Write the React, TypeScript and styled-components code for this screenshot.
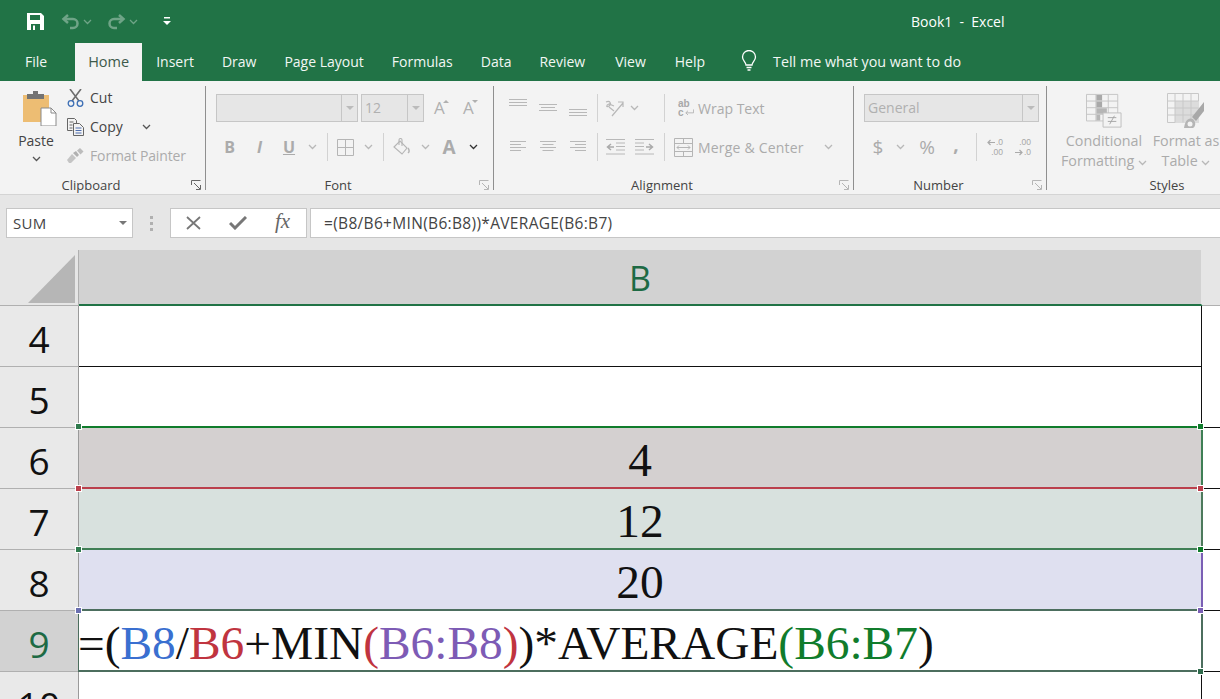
import styled, { createGlobalStyle } from "styled-components";
import type { ReactNode } from "react";

const GlobalStyle = createGlobalStyle`
  html, body { margin: 0; padding: 0; height: 100%; overflow: hidden; background: #fff; }
  body { font-family: "Open Sans", "Noto Sans", sans-serif; }
`;

const Page = styled.div`
  width: 1220px;
  height: 699px;
  overflow: hidden;
  display: flex;
  flex-direction: column;
`;

const TitleBar = styled.div`
  height: 43px;
  background: #217346;
  display: flex;
  align-items: center;
  color: #fff;
  flex: none;
`;

const Quick = styled.div<{ $w: number; $dim?: boolean }>`
  width: ${(p) => p.$w}px;
  display: flex;
  justify-content: center;
  align-items: center;
  opacity: ${(p) => (p.$dim ? 0.35 : 1)};
`;

const QuickBar = styled.div`
  display: flex;
  align-items: center;
  padding-left: 24px;
  width: 880px;
`;

const Title = styled.div`
  margin-left: 7px;
  font-size: 14px;
  white-space: pre;
`;

const TabBar = styled.div`
  height: 38px;
  background: #217346;
  display: flex;
  align-items: stretch;
  flex: none;
  padding-left: 11px;
`;

const Tab = styled.div<{ $active?: boolean; $ml?: number }>`
  padding: 0 ${(p) => (p.$active ? 13 : 14)}px 2px;
  margin-left: ${(p) => p.$ml ?? 0}px;
  display: flex;
  align-items: center;
  font-size: 14px;
  box-sizing: border-box;
  color: ${(p) => (p.$active ? "#3d5a4a" : "#f2f7f4")};
  background: ${(p) => (p.$active ? "#f3f3f3" : "transparent")};
  ${(p) => (p.$active ? "width: 67px; font-size: 14.5px;" : "")}
`;

const FileTab = styled(Tab)`
  margin-right: 14px;
`;

const TellMe = styled.div`
  margin-left: 21px;
  display: flex;
  align-items: center;
  gap: 15px;
  font-size: 14.3px;
  color: #f2f7f4;
  padding-bottom: 2px;
`;

const Ribbon = styled.div`
  height: 114px;
  background: #f3f3f3;
  border-bottom: 1px solid #d4d4d4;
  box-sizing: border-box;
  display: flex;
  flex: none;
  overflow: hidden;
`;

const Group = styled.div<{ $w: number; $last?: boolean }>`
  width: ${(p) => p.$w}px;
  flex: none;
  box-sizing: border-box;
  margin-top: 5px;
  height: 104px;
  border-right: ${(p) => (p.$last ? "none" : "1px solid #8f8f8f")};
  display: flex;
  flex-direction: column;
  position: relative;
`;

const GroupBody = styled.div<{ $pl?: number }>`
  flex: 1;
  padding-left: ${(p) => p.$pl ?? 0}px;
  min-height: 0;
`;

const GroupLabel = styled.div<{ $pr?: number; $pl?: number }>`
  height: 20px;
  flex: none;
  text-align: center;
  font-size: 13px;
  color: #444;
  line-height: 18px;
  margin-bottom: -6px;
  padding-right: ${(p) => p.$pr ?? 23}px;
  padding-left: ${(p) => p.$pl ?? 0}px;
`;

const Launcher = styled.div`
  position: absolute;
  right: 4px;
  bottom: 0;
  line-height: 0;
`;

const Row = styled.div<{ $h: number; $mt?: number }>`
  display: flex;
  align-items: center;
  height: ${(p) => p.$h}px;
  margin-top: ${(p) => p.$mt ?? 0}px;
`;

const Slot = styled.div<{ $w: number; $dy?: number }>`
  width: ${(p) => p.$w}px;
  flex: none;
  display: flex;
  justify-content: center;
  align-items: center;
  color: #aaa;
  ${(p) => (p.$dy ? `transform: translateY(${p.$dy}px);` : "")}
`;

const Divider = styled.div`
  width: 1px;
  height: 28px;
  flex: none;
  background: #d2d2d2;
`;

const Combo = styled.div<{ $w: number }>`
  width: ${(p) => p.$w}px;
  height: 28px;
  box-sizing: border-box;
  background: #e6e6e6;
  border: 1px solid #c6c6c6;
  display: flex;
  align-items: stretch;
  flex: none;
  margin-right: 3px;
  font-size: 14px;
  color: #b0b0b0;
`;

const ComboText = styled.div`
  flex: 1;
  padding-left: 3px;
  line-height: 26px;
`;

const ComboArrow = styled.div`
  width: 15px;
  border-left: 1px solid #c6c6c6;
  display: flex;
  align-items: center;
  justify-content: center;
`;

const Caret = styled.div`
  width: 0;
  height: 0;
  border-left: 4px solid transparent;
  border-right: 4px solid transparent;
  border-top: 4px solid #bbb;
`;

const PasteCol = styled.div`
  width: 52px;
  margin-left: 10px;
  display: flex;
  flex-direction: column;
  align-items: center;
  font-size: 14px;
  color: #444;
  flex: none;
`;

const PasteLabel = styled.div`
  margin-top: 4px;
  line-height: 20px;
`;

const PasteChevron = styled.div`
  margin-top: 5px;
  line-height: 0;
`;

const ClipRows = styled.div`
  display: flex;
  flex-direction: column;
  margin-left: 5px;
  margin-top: -3px;
`;

const ClipRow = styled.div<{ $dim?: boolean }>`
  height: 29px;
  display: flex;
  align-items: center;
  gap: 6px;
  font-size: 14px;
  letter-spacing: ${(p) => (p.$dim ? "-0.12px" : "0")};
  color: ${(p) => (p.$dim ? "#ababab" : "#444")};
  white-space: nowrap;
`;

const ClipBody = styled(GroupBody)`
  display: flex;
`;

const Disabled = styled.span<{ $size?: number; $ml?: number; $w?: number; $lift?: number; $ls?: number }>`
  color: #ababab;
  font-size: ${(p) => p.$size ?? 14}px;
  margin-left: ${(p) => p.$ml ?? 0}px;
  letter-spacing: ${(p) => p.$ls ?? 0}px;
  white-space: nowrap;
  ${(p) => (p.$w ? `width: ${p.$w}px;` : "")}
  ${(p) => (p.$lift ? `margin-top: -${p.$lift}px;` : "")}
`;

const Underlined = styled(Disabled)`
  text-decoration: underline;
`;

const GrowGlyph = styled.div`
  display: flex;
  align-items: flex-start;
  color: #b0b0b0;
  font-size: 17px;
  line-height: 20px;
  width: 16px;
`;

const GrowMark = styled.div<{ $down?: boolean }>`
  width: 0;
  height: 0;
  margin: 2px 0 0 -2px;
  border-left: 3px solid transparent;
  border-right: 3px solid transparent;
  ${(p) => (p.$down ? "border-top: 3px solid #b0b0b0;" : "border-bottom: 3px solid #b0b0b0;")}
`;

const TinyStack = styled.div`
  display: flex;
  flex-direction: column;
  font-family: "Liberation Sans", sans-serif;
  font-size: 8.5px;
  line-height: 10px;
  color: #a8a8a8;
`;

const TinyLine = styled.div`
  display: flex;
  align-items: center;
  justify-content: flex-end;
  gap: 1px;
  height: 10px;
`;

const WrapGlyph = styled(TinyStack)`
  font-size: 10px;
  font-weight: 700;
  line-height: 11.5px;
  width: 16px;
`;

const WrapLine = styled(TinyLine)`
  justify-content: flex-start;
  height: 8.5px;
`;

const StyleBtn = styled.div<{ $w: number }>`
  width: ${(p) => p.$w}px;
  display: flex;
  flex-direction: column;
  align-items: center;
  color: #ababab;
  font-size: 14.3px;
  line-height: 20px;
  white-space: nowrap;
  flex: none;
`;

const StyleText = styled.div`
  margin-top: 2px;
  text-align: center;
`;

const StylesBody = styled(GroupBody)`
  display: flex;
  padding-top: 7px;
  padding-left: 16px;
`;

const FormulaBar = styled.div`
  height: 55px;
  background: #e6e6e6;
  display: flex;
  align-items: flex-start;
  padding: 13px 0 0 6px;
  box-sizing: border-box;
  flex: none;
`;

const FieldBox = styled.div<{ $w?: number }>`
  height: 30px;
  box-sizing: border-box;
  background: #fff;
  border: 1px solid #c6c6c6;
  display: flex;
  align-items: center;
  flex: ${(p) => (p.$w ? "none" : "1")};
  ${(p) => (p.$w ? `width: ${p.$w}px;` : "")}
`;

const NameBox = styled(FieldBox)`
  justify-content: space-between;
  padding: 0 5px 0 6px;
  font-size: 15px;
  color: #444;
  letter-spacing: 0.3px;
`;

const NameCaret = styled(Caret)`
  border-top-color: #777;
`;

const Grip = styled.div`
  width: 37px;
  display: flex;
  flex-direction: column;
  align-items: center;
  gap: 3px;
  padding-top: 8px;
  flex: none;
`;

const GripDot = styled.div`
  width: 3px;
  height: 3px;
  background: #b0b0b0;
`;

const FxSlot = styled.div<{ $w: number }>`
  width: ${(p) => p.$w}px;
  display: flex;
  justify-content: center;
  align-items: center;
`;

const FxText = styled.span`
  font-family: "Liberation Serif", serif;
  font-style: italic;
  font-size: 21px;
  color: #666;
  margin-top: -3px;
`;

const FormulaInput = styled(FieldBox)`
  margin-left: 3px;
  padding-left: 13px;
  font-size: 15.5px;
  letter-spacing: 0.32px;
  color: #444;
  border-right: none;
`;

const Sheet = styled.div`
  flex: 1;
  display: grid;
  grid-template-columns: 79px 1124px 17px;
  grid-auto-rows: 61px;
  grid-template-rows: 56px;
  position: relative;
  min-height: 0;
  overflow: hidden;
`;

const Corner = styled.div`
  background: #e6e6e6;
  border-bottom: 1px solid #b0b0b0;
  border-right: 1px solid #b0b0b0;
  box-sizing: border-box;
  line-height: 0;
`;

const ColHead = styled.div`
  background: #d2d2d2;
  border-bottom: 2px solid #217346;
  border-right: 2px solid #e6e6e6;
  box-sizing: border-box;
  display: flex;
  align-items: center;
  justify-content: center;
  font-size: 34px;
  color: #1d6a44;
  padding-top: 2px;
`;

const HeadFill = styled.div`
  background: #e6e6e6;
  border-bottom: 1px solid #b0b0b0;
`;

const RowHead = styled.div<{ $active?: boolean }>`
  background: ${(p) => (p.$active ? "#d2d2d2" : "#e9e9e9")};
  border-bottom: 1px solid #b0b0b0;
  border-right: 1px solid #9a9a9a;
  box-sizing: border-box;
  display: flex;
  align-items: center;
  justify-content: center;
  font-size: 37px;
  color: ${(p) => (p.$active ? "#1d6a44" : "#111")};
  padding-top: 5px;
`;

const Cell = styled.div<{ $bg?: string; $top?: string; $right?: string; $left?: string; $bottom?: string }>`
  position: relative;
  background: ${(p) => p.$bg ?? "#fff"};
  box-sizing: border-box;
  border-bottom: ${(p) => (p.$bottom ? `2px solid ${p.$bottom}` : "1px solid #111")};
  border-right: ${(p) => (p.$right ? `2px solid ${p.$right}` : "1px solid #111")};
  margin-right: ${(p) => (p.$right ? 0 : 1)}px;
  box-shadow: ${(p) => (p.$top ? `0 -2px 0 ${p.$top}` : "0 0 0 transparent")}${(p) => (p.$left ? `, -1px 0 0 ${p.$left}` : "")};
  display: flex;
  align-items: center;
  justify-content: center;
  font-family: "Liberation Serif", serif;
  font-size: 47.4px;
  color: #111;
  padding-top: 4px;
`;

const FormulaCell = styled(Cell)`
  justify-content: flex-start;
  white-space: nowrap;
`;

const FormulaText = styled.span`
  margin-left: -1px;
`;

const Ref = styled.span<{ $c: string }>`
  color: ${(p) => p.$c};
`;

const Outside = styled.div<{ $line?: boolean }>`
  background: #fff;
  border-bottom: ${(p) => (p.$line ? "1px solid #111" : "none")};
`;

const Handle = styled.div<{ $c: string; $x: "l" | "r"; $y?: "t" | "b" }>`
  position: absolute;
  ${(p) => (p.$y === "t" ? "top: -4px;" : "bottom: -4px;")}
  ${(p) => (p.$x === "l" ? "left: -3px;" : "right: -2px;")}
  width: 5px;
  height: 5px;
  background: ${(p) => p.$c};
  z-index: 3;
  outline: 1px solid #fff;
`;

const ChevronIcon = ({ c = "#b8b8b8" }: { c?: string }) => (
  <svg width="9" height="6" viewBox="0 0 9 6" fill="none">
    <path d="M1 1l3.500 3.500L8 1" stroke={c} strokeWidth="1.300" />
  </svg>
);

const LauncherIcon = ({ c = "#b5b5b5" }: { c?: string }) => (
  <svg width="10" height="10" viewBox="0 0 10 10" fill="none" stroke={c}>
    <path d="M.5 5V.5H9.500M3 3l6 6M9.500 5V9.500H5" />
  </svg>
);

const SaveIcon = () => (
  <svg width="17" height="17" viewBox="0 0 17 17">
    <path d="M0 0h14l3 3v14H0z" fill="#fff" />
    <path d="M3 2h10v5H3z" fill="#217346" />
    <path d="M4 11h9v6H4z" fill="#217346" />
    <path d="M6 12.500h2V17H6z" fill="#fff" />
  </svg>
);

const UndoIcon = ({ flip }: { flip?: boolean }) => (
  <svg width="19" height="16" viewBox="0 0 19 16" fill="none" style={flip ? { transform: "scaleX(-1)" } : undefined}>
    <path d="M3 5h9a4.500 4.500 0 0 1 0 9H9" stroke="#fff" strokeWidth="2.500" />
    <path d="M7 1L2.500 5 7 9" stroke="#fff" strokeWidth="2.500" />
  </svg>
);

const BulbIcon = () => (
  <svg width="18" height="22" viewBox="0 0 18 22" fill="none" stroke="#fff" strokeWidth="1.300">
    <path d="M6 15c0-3-3.500-4-3.500-8a6.500 6.500 0 0 1 13 0c0 4-3.500 5-3.500 8z" />
    <path d="M6.500 17.500h5M7.500 20h3" />
  </svg>
);

const PasteIcon = () => (
  <svg width="35" height="35" viewBox="0 0 35 35" style={{ marginLeft: 6 }}>
    <path d="M1 4h26v27H1z" fill="#edbd73" />
    <path d="M5 3h6V0h5v3h6v5H5z" fill="#737373" />
    <path d="M19 17h10l5 5v13H19z" fill="#fff" stroke="#8a8a8a" />
    <path d="M29 17v5h5" fill="none" stroke="#8a8a8a" />
  </svg>
);

const CutIcon = () => (
  <svg width="17" height="18" viewBox="0 0 17 18" fill="none">
    <path d="M3 0l9 12M14 0L5 12" stroke="#6d6d6d" strokeWidth="1.600" />
    <circle cx="4" cy="14.500" r="2.800" stroke="#3d6fb5" strokeWidth="1.300" />
    <circle cx="13" cy="14.500" r="2.800" stroke="#3d6fb5" strokeWidth="1.300" />
  </svg>
);

const CopyIcon = () => (
  <svg width="17" height="18" viewBox="0 0 17 18" fill="none" stroke="#666">
    <path d="M.5.5h7l2 2v3M.5.500v12h5" />
    <path d="M2.500 4h4M2.500 7h3M2.500 10h3" />
    <path d="M6.500 5.500h6l4 4v8h-10z" fill="#f3f3f3" />
    <path d="M8.500 10h6M8.500 12.500h6M8.500 15h6" stroke="#4f6fb0" />
  </svg>
);

const BrushIcon = () => (
  <svg width="17" height="15" viewBox="0 0 17 15">
    <path d="M0 12l5-6 4 4-5 5H2z" fill="#c4c4c4" />
    <path d="M6 5l3-2 3 4-2 2z" fill="#b0b0b0" />
    <path d="M10 2.500l3-2.500 3.500 3.500-3 3z" fill="#bcbcbc" />
  </svg>
);

const BorderIcon = () => (
  <svg width="17" height="17" viewBox="0 0 17 17" fill="none" stroke="#b5b5b5">
    <path d="M.5.500h16v16H.5zM8.500.5v16M.5 8.500h16" />
  </svg>
);

const FillIcon = () => (
  <svg width="18" height="18" viewBox="0 0 18 18" fill="none" stroke="#b5b5b5" strokeWidth="1.100">
    <path d="M1 9l6-6 7 7-5 6z" />
    <path d="M6 7V2a1.500 1.500 0 0 1 3 0v6" />
    <path d="M15 10c1.500 2 1.500 4 0 5" strokeWidth="1.500" />
  </svg>
);

const Lines = ({ widths, gap = 3.5, align = "left", w = 18 }: { widths: number[]; gap?: number; align?: "left" | "center" | "right"; w?: number }) => (
  <svg width={w} height={gap * widths.length + 2} viewBox={`0 0 ${w} ${gap * widths.length + 2}`} stroke="#b8b8b8">
    {widths.map((lw, i) => {
      const x = align === "left" ? 0 : align === "center" ? (w - lw) / 2 : w - lw;
      return <path key={i} d={`M${x} ${i * gap + 1.5}h${lw}`} />;
    })}
  </svg>
);

const OrientIcon = () => (
  <svg width="20" height="18" viewBox="0 0 20 18" fill="none" stroke="#b8b8b8" strokeWidth="1.200">
    <path d="M1 3c4-2 6 2 3 4s-3-1 0-2l5 2M4 8l5 4" />
    <path d="M7 17L18 4M13 3h5v5" />
  </svg>
);

const IndentIcon = ({ right }: { right?: boolean }) => (
  <svg width="19" height="16" viewBox="0 0 19 16" fill="none" stroke="#b8b8b8" style={right ? { transform: "scaleX(-1)" } : undefined}>
    <path d="M0 .5h19M10 4h9M10 7.500h9M10 11h9M0 15h19" />
    <path d="M8 8H2M5 5L1.500 8 5 11" strokeWidth="1.500" stroke="#aaa" />
  </svg>
);

const MergeIcon = () => (
  <svg width="19" height="19" viewBox="0 0 19 19" fill="none" stroke="#b5b5b5">
    <path d="M.5.500h18v18H.5zM.5 5.500h18M.5 13.500h18M9.500.5v5M9.500 13.500v5" />
    <path d="M3 9.500h13M5 7.500l-2 2 2 2M14 7.500l2 2-2 2" />
  </svg>
);

const ArrowTiny = ({ left }: { left?: boolean }) => (
  <svg width="8" height="7" viewBox="0 0 8 7" fill="none" stroke="#aaa" strokeWidth="1.200" style={left ? { transform: "scaleX(-1)" } : undefined}>
    <path d="M0 3.500h7M4.500 1L7 3.500 4.500 6" />
  </svg>
);

const WrapArrow = () => (
  <svg width="11" height="8" viewBox="0 0 11 8" fill="none" stroke="#b0b0b0">
    <path d="M1 5h9V1M1 5l2.500-2.500M1 5l2.500 2.500" />
  </svg>
);

const CondFormatIcon = () => (
  <svg width="36" height="36" viewBox="0 0 38 36" fill="none">
    <path d="M.5.5h33v28H.5z" stroke="#c4c4c4" />
    <path d="M.5 7.500h33M.5 14.500h33M.5 21.500h33M10.500.5v28M23.500.5v28" stroke="#c4c4c4" />
    <path d="M11 1h6v6h-6zM11 8h6v6h-6z" fill="#a9a9a9" />
    <path d="M11 15h11v6H11zM11 22h4v6h-4z" fill="#b5b5b5" />
    <path d="M18 20h19v15H18z" fill="#f3f3f3" stroke="#bdbdbd" />
    <path d="M23 25h9M23 29h9M30 23l-5 9" stroke="#a5a5a5" />
  </svg>
);

const TableIcon = () => (
  <svg width="38" height="36" viewBox="0 0 38 36" fill="none">
    <path d="M.5.5h31v29H.5z" stroke="#c8c8c8" />
    <path d="M8 8h24v22H8z" fill="#dcdcdc" />
    <path d="M.5 8h31M.5 15h31M.5 22h31M8 .5v29M16 .5v29M24 .5v29" stroke="#c8c8c8" />
    <path d="M37 9l-12 15 4 4 8-10z" fill="#a8a8a8" />
    <path d="M26 26c-5-2-8 2-9 9h9c3-2 3-6 0-9z" fill="#b5b5b5" />
    <circle cx="23" cy="31" r="2.500" fill="#f3f3f3" />
  </svg>
);

const DotCaret = () => (
  <svg width="8" height="9" viewBox="0 0 8 9">
    <path d="M1 0h6v1.500H1z" fill="#fff" />
    <path d="M0 4h8L4 8z" fill="#fff" />
  </svg>
);

const tabs: { name: string; ml?: number }[] = [
  { name: "Insert" },
  { name: "Draw" },
  { name: "Page Layout" },
  { name: "Formulas" },
  { name: "Data" },
  { name: "Review" },
  { name: "View", ml: 2 },
  { name: "Help", ml: 1 },
];

function GroupShell({ w, label, launcher, children, pl }: { w: number; label: string; launcher?: boolean; children: ReactNode; pl?: number }) {
  return (
    <Group $w={w}>
      <GroupBody $pl={pl}>{children}</GroupBody>
      <GroupLabel>{label}</GroupLabel>
      {launcher && (
        <Launcher>
          <LauncherIcon />
        </Launcher>
      )}
    </Group>
  );
}

export default function App() {
  return (
    <Page>
      <GlobalStyle />
      <TitleBar>
        <QuickBar>
          <Quick $w={22}><SaveIcon /></Quick>
          <Quick $w={14} />
          <Quick $w={21} $dim><UndoIcon /></Quick>
          <Quick $w={13} $dim><ChevronIcon c="#fff" /></Quick>
          <Quick $w={12} />
          <Quick $w={21} $dim><UndoIcon flip /></Quick>
          <Quick $w={13} $dim><ChevronIcon c="#fff" /></Quick>
          <Quick $w={23} />
          <Quick $w={8}><DotCaret /></Quick>
        </QuickBar>
        <Title>{"Book1  -  Excel"}</Title>
      </TitleBar>
      <TabBar>
        <FileTab>File</FileTab>
        <Tab $active>Home</Tab>
        {tabs.map((t) => (
          <Tab key={t.name} $ml={t.ml}>{t.name}</Tab>
        ))}
        <TellMe>
          <BulbIcon />
          Tell me what you want to do
        </TellMe>
      </TabBar>
      <Ribbon>
        <Group $w={206}>
          <ClipBody>
            <PasteCol>
              <Row $h={37} $mt={4}><PasteIcon /></Row>
              <PasteLabel>Paste</PasteLabel>
              <PasteChevron><ChevronIcon c="#555" /></PasteChevron>
            </PasteCol>
            <ClipRows>
              <ClipRow><CutIcon />Cut</ClipRow>
              <ClipRow>
                <CopyIcon />Copy
                <Slot $w={36}><ChevronIcon c="#555" /></Slot>
              </ClipRow>
              <ClipRow $dim><BrushIcon />Format Painter</ClipRow>
            </ClipRows>
          </ClipBody>
          <GroupLabel>Clipboard</GroupLabel>
          <Launcher><LauncherIcon c="#666" /></Launcher>
        </Group>
        <GroupShell w={288} label="Font" launcher pl={10}>
          <Row $h={28} $mt={8}>
            <Combo $w={142}>
              <ComboText />
              <ComboArrow><Caret /></ComboArrow>
            </Combo>
            <Combo $w={63}>
              <ComboText>12</ComboText>
              <ComboArrow><Caret /></ComboArrow>
            </Combo>
            <Slot $w={30}><GrowGlyph>A<GrowMark /></GrowGlyph></Slot>
            <Slot $w={28}><GrowGlyph>A<GrowMark $down /></GrowGlyph></Slot>
          </Row>
          <Row $h={28} $mt={11}>
            <Slot $w={27}><Disabled $size={16}><b>B</b></Disabled></Slot>
            <Slot $w={33}><Disabled $size={16}><b><i>I</i></b></Disabled></Slot>
            <Slot $w={26}><Underlined $size={16}><b>U</b></Underlined></Slot>
            <Slot $w={20}><ChevronIcon /></Slot>
            <Slot $w={10}><Divider /></Slot>
            <Slot $w={26}><BorderIcon /></Slot>
            <Slot $w={20}><ChevronIcon /></Slot>
            <Slot $w={10}><Divider /></Slot>
            <Slot $w={28}><FillIcon /></Slot>
            <Slot $w={18}><ChevronIcon /></Slot>
            <Slot $w={30}><Disabled $size={19}><b>A</b></Disabled></Slot>
            <Slot $w={18}><ChevronIcon c="#333" /></Slot>
          </Row>
        </GroupShell>
        <GroupShell w={360} label="Alignment" launcher pl={9}>
          <Row $h={28} $mt={8}>
            <Slot $w={30} $dy={-5}><Lines widths={[18, 18, 18]} gap={3} /></Slot>
            <Slot $w={30}><Lines widths={[18, 14, 18]} gap={3} align="center" /></Slot>
            <Slot $w={30} $dy={5}><Lines widths={[18, 18, 18]} gap={3} /></Slot>
            <Slot $w={9}><Divider /></Slot>
            <Slot $w={26}><OrientIcon /></Slot>
            <Slot $w={12}><ChevronIcon /></Slot>
            <Slot $w={24} />
            <Divider />
            <Slot $w={12} />
            <Slot $w={18}>
              <WrapGlyph>
                <WrapLine>ab</WrapLine>
                <WrapLine>c<WrapArrow /></WrapLine>
              </WrapGlyph>
            </Slot>
            <Disabled $ml={3}>Wrap Text</Disabled>
          </Row>
          <Row $h={28} $mt={11}>
            <Slot $w={30}><Lines widths={[16, 11, 16, 11]} gap={3} w={16} /></Slot>
            <Slot $w={30}><Lines widths={[16, 11, 16, 11]} gap={3} align="center" w={16} /></Slot>
            <Slot $w={30}><Lines widths={[16, 11, 16, 11]} gap={3} align="right" w={16} /></Slot>
            <Slot $w={9}><Divider /></Slot>
            <Slot $w={27}><IndentIcon /></Slot>
            <Slot $w={30}><IndentIcon right /></Slot>
            <Slot $w={10}><Divider /></Slot>
            <Slot $w={5} />
            <Slot $w={19}><MergeIcon /></Slot>
            <Disabled $ml={5} $w={126} $ls={0.2}>Merge &amp; Center</Disabled>
            <ChevronIcon />
          </Row>
        </GroupShell>
        <GroupShell w={193} label="Number" launcher pl={10}>
          <Row $h={28} $mt={8}>
            <Combo $w={175}>
              <ComboText>General</ComboText>
              <ComboArrow><Caret /></ComboArrow>
            </Combo>
          </Row>
          <Row $h={28} $mt={11}>
            <Slot $w={28}><Disabled $size={19}>$</Disabled></Slot>
            <Slot $w={16}><ChevronIcon /></Slot>
            <Slot $w={38}><Disabled $size={19}>%</Disabled></Slot>
            <Slot $w={20}><Disabled $size={19} $lift={6}><b>,</b></Disabled></Slot>
            <Slot $w={20}><Divider /></Slot>
            <Slot $w={18}>
              <TinyStack>
                <TinyLine><ArrowTiny left />.0</TinyLine>
                <TinyLine>.00</TinyLine>
              </TinyStack>
            </Slot>
            <Slot $w={38}>
              <TinyStack>
                <TinyLine>.00</TinyLine>
                <TinyLine><ArrowTiny />.0</TinyLine>
              </TinyStack>
            </Slot>
          </Row>
        </GroupShell>
        <Group $w={173} $last>
          <StylesBody>
            <StyleBtn $w={82}>
              <CondFormatIcon />
              <StyleText>Conditional<br />Formatting <ChevronIcon /></StyleText>
            </StyleBtn>
            <StyleBtn $w={82}>
              <TableIcon />
              <StyleText>Format as<br />Table <ChevronIcon /></StyleText>
            </StyleBtn>
          </StylesBody>
          <GroupLabel $pr={0} $pl={67}>Styles</GroupLabel>
        </Group>
      </Ribbon>
      <FormulaBar>
        <NameBox $w={127}>SUM<NameCaret /></NameBox>
        <Grip><GripDot /><GripDot /><GripDot /></Grip>
        <FieldBox $w={137}>
          <FxSlot $w={44}>
            <svg width="15" height="14" viewBox="0 0 15 14" stroke="#777" strokeWidth="1.800"><path d="M1 1l13 12M14 1L1 13" /></svg>
          </FxSlot>
          <FxSlot $w={45}>
            <svg width="18" height="14" viewBox="0 0 18 14" fill="none" stroke="#777" strokeWidth="3"><path d="M1 7l5 5L17 1" /></svg>
          </FxSlot>
          <FxSlot $w={45}><FxText>fx</FxText></FxSlot>
        </FieldBox>
        <FormulaInput>=(B8/B6+MIN(B6:B8))*AVERAGE(B6:B7)</FormulaInput>
      </FormulaBar>
      <Sheet>
        <Corner>
          <svg width="78" height="54" viewBox="0 0 78 54"><path d="M28 53L75 5v48z" fill="#b6b6b6" /></svg>
        </Corner>
        <ColHead>B</ColHead>
        <HeadFill />

        <RowHead>4</RowHead>
        <Cell />
        <Outside />

        <RowHead>5</RowHead>
        <Cell />
        <Outside $line />

        <RowHead>6</RowHead>
        <Cell $bg="#d4d0d0" $top="#107c2c" $right="#3f7f55" $bottom="#bb3f4c">
          4
          <Handle $x="l" $y="t" $c="#2f7a4d" />
          <Handle $x="r" $y="t" $c="#107c2c" />
          <Handle $x="l" $c="#bb3f4c" />
          <Handle $x="r" $c="#bb3f4c" />
        </Cell>
        <Outside $line />

        <RowHead>7</RowHead>
        <Cell $bg="#d8e1de" $right="#4d7a5c" $bottom="#3f7f55">
          12
          <Handle $x="l" $c="#2f7a4d" />
          <Handle $x="r" $c="#107c2c" />
        </Cell>
        <Outside $line />

        <RowHead>8</RowHead>
        <Cell $bg="#dfe0f0" $right="#7b5fb5" $bottom="#4c6e5e">
          20
          <Handle $x="l" $c="#6a6fb0" />
          <Handle $x="r" $c="#7b5fb5" />
        </Cell>
        <Outside $line />

        <RowHead $active>9</RowHead>
        <FormulaCell $right="#4c6e5e" $bottom="#4c6e5e" $left="#4c6e5e">
          <FormulaText>
            =(<Ref $c="#3a6fd0">B8</Ref>/<Ref $c="#c0343f">B6</Ref>+MIN<Ref $c="#c0343f">(</Ref><Ref $c="#7d5bb5">B6:B8</Ref><Ref $c="#c0343f">)</Ref>)*AVERAGE<Ref $c="#107c2c">(B6:B7</Ref>)
          </FormulaText>
          <Handle $x="r" $c="#2f6b4c" />
        </FormulaCell>
        <Outside $line />

        <RowHead>10</RowHead>
        <Cell />
        <Outside />
      </Sheet>
    </Page>
  );
}
